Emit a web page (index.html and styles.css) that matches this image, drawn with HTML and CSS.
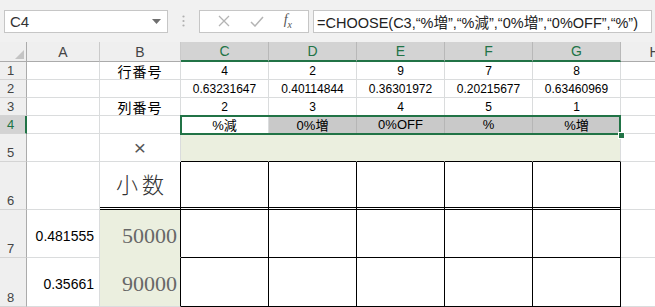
FILE: index.html
```html
<!DOCTYPE html>
<html lang="ja">
<head>
    <meta charset="UTF-8">
    <title>CHOOSE - Sheet1</title>
    <link rel="stylesheet" href="styles.css">
</head>
<body>
    <div class="toolbar">
        <div class="namebox">
            <span>C4</span>
            <svg class="drop" width="9" height="5" viewBox="0 0 9 5"><path d="M0 0h9L4.5 5z" fill="#6f6f6f"/></svg>
        </div>
        <div class="grip">
            <svg width="3" height="12" viewBox="0 0 3 12"><circle cx="1.5" cy="1.5" r="1.1" fill="#b0b0b0"/><circle cx="1.5" cy="6" r="1.1" fill="#b0b0b0"/><circle cx="1.5" cy="10.5" r="1.1" fill="#b0b0b0"/></svg>
        </div>
        <div class="fxbox">
            <svg width="12" height="12" viewBox="0 0 12 12"><path d="M1 1l10 10M11 1L1 11" stroke="#b4b4b4" stroke-width="1.3"/></svg>
            <svg width="14" height="11" viewBox="0 0 14 11"><path d="M1 6l4 4 8-9" stroke="#b4b4b4" stroke-width="1.5" fill="none"/></svg>
            <span class="fx">f<sub>x</sub></span>
        </div>
        <div class="formula">=CHOOSE(C3,“%増”,“%減”,“0%増”,“0%OFF”,“%”)</div>
    </div>

    <div class="sheet">
        <!-- column headers -->
        <div class="corner"><svg width="9" height="9" viewBox="0 0 9 9"><path d="M9 0v9H0z" fill="#c4c4c4"/></svg></div>
        <div class="ch">A</div>
        <div class="ch">B</div>
        <div class="ch sel">C</div>
        <div class="ch sel">D</div>
        <div class="ch sel">E</div>
        <div class="ch sel">F</div>
        <div class="ch sel">G</div>
        <div class="ch">H</div>

        <!-- row 1 -->
        <div class="rh">1</div>
        <div class="c"></div>
        <div class="c jp">行番号</div>
        <div class="c">4</div>
        <div class="c">2</div>
        <div class="c">9</div>
        <div class="c">7</div>
        <div class="c">8</div>
        <div class="c"></div>

        <!-- row 2 -->
        <div class="rh">2</div>
        <div class="c"></div>
        <div class="c"></div>
        <div class="c">0.63231647</div>
        <div class="c">0.40114844</div>
        <div class="c">0.36301972</div>
        <div class="c">0.20215677</div>
        <div class="c">0.63460969</div>
        <div class="c"></div>

        <!-- row 3 -->
        <div class="rh">3</div>
        <div class="c"></div>
        <div class="c jp">列番号</div>
        <div class="c">2</div>
        <div class="c">3</div>
        <div class="c">4</div>
        <div class="c">5</div>
        <div class="c">1</div>
        <div class="c"></div>

        <!-- row 4 -->
        <div class="rh sel">4</div>
        <div class="c"></div>
        <div class="c"></div>
        <div class="range">
            <div class="c lbl">%減</div>
            <div class="c lbl shade">0%増</div>
            <div class="c lbl shade">0%OFF</div>
            <div class="c lbl shade">%</div>
            <div class="c lbl shade">%増</div>
            <span class="handle"></span>
        </div>
        <div class="c"></div>

        <!-- row 5 -->
        <div class="rh">5</div>
        <div class="c"></div>
        <div class="c times">×</div>
        <div class="c green boxtop"></div>
        <div class="c green boxtop"></div>
        <div class="c green boxtop"></div>
        <div class="c green boxtop"></div>
        <div class="c green boxtop last"></div>
        <div class="c"></div>

        <!-- row 6 -->
        <div class="rh">6</div>
        <div class="c"></div>
        <div class="c big edge dbl">小数</div>
        <div class="c box dbl"></div>
        <div class="c box dbl"></div>
        <div class="c box dbl"></div>
        <div class="c box dbl"></div>
        <div class="c box dbl"></div>
        <div class="c"></div>

        <!-- row 7 -->
        <div class="rh">7</div>
        <div class="c num">0.481555</div>
        <div class="c amount green edge joined">50000</div>
        <div class="c box"></div>
        <div class="c box"></div>
        <div class="c box"></div>
        <div class="c box"></div>
        <div class="c box"></div>
        <div class="c"></div>

        <!-- row 8 -->
        <div class="rh">8</div>
        <div class="c num">0.35661</div>
        <div class="c amount green edge">90000</div>
        <div class="c box"></div>
        <div class="c box"></div>
        <div class="c box"></div>
        <div class="c box"></div>
        <div class="c box"></div>
        <div class="c"></div>
    </div>
</body>
</html>
```

FILE: styles.css
```css
body {
    margin: 0;
    width: 655px;
    height: 307px;
    overflow: hidden;
    background: #ffffff;
    font-family: "Liberation Sans", "Noto Sans CJK JP", sans-serif;
    color: #000;
}

/* Formula bar */
.toolbar {
    height: 42px;
    display: flex;
    align-items: center;
    padding: 0 3px 0 4px;
    background: #f1f1f1;
    box-sizing: border-box;
}

.namebox,
.fxbox,
.formula {
    height: 23px;
    background: #ffffff;
    border: 1px solid #c6c6c6;
    box-sizing: border-box;
    display: flex;
    align-items: center;
}

.namebox {
    width: 164px;
    justify-content: space-between;
    padding: 0 6px 0 5px;
    font-size: 15px;
    color: #333;
}

.grip {
    width: 31px;
    display: flex;
    justify-content: center;
}

.fxbox {
    width: 110px;
    justify-content: space-around;
    padding: 0 6px 0 8px;
    margin-right: 4px;
}

.fx {
    font-family: "Liberation Serif", serif;
    font-style: italic;
    font-size: 14px;
    color: #555;
}

.fx sub {
    font-size: 10px;
}

.formula {
    flex: 1;
    padding-left: 3px;
    font-size: 14.5px;
    color: #222;
    white-space: nowrap;
    overflow: hidden;
}

/* Sheet grid */
.sheet {
    width: 689px;
    display: grid;
    grid-template-columns: 27px 73px 81px 88px 88px 88px 88px 88px 68px;
    grid-template-rows: 20px 18px 18px 18px 18px 28px 48px 48px 49px;
}

.corner,
.ch,
.rh,
.c {
    box-sizing: border-box;
    display: flex;
    align-items: center;
    justify-content: center;
    overflow: hidden;
    white-space: nowrap;
}

.corner {
    background: #efefef;
    border-right: 1px solid #ababab;
    border-bottom: 1px solid #ababab;
    align-items: flex-end;
    justify-content: flex-end;
    padding: 0 2px 2px 0;
}

.ch {
    background: #efefef;
    border-right: 1px solid #cacaca;
    border-bottom: 1px solid #ababab;
    font-size: 14px;
    color: #444;
}

.ch.sel {
    background: #d3d3d3;
    color: #217346;
    border-right-color: #b8b8b8;
    border-bottom: 2px solid #217346;
}

.rh {
    background: #efefef;
    border-right: 1px solid #ababab;
    border-bottom: 1px solid #d4d4d4;
    justify-content: flex-start;
    align-items: flex-end;
    padding: 0 0 0 7px;
    font-size: 13px;
    line-height: 17px;
    color: #444;
}

.rh.sel {
    background: #d3d3d3;
    color: #217346;
    border-right: 2px solid #217346;
}

.c {
    border-right: 1px solid #dadcdd;
    border-bottom: 1px solid #dadcdd;
    font-size: 12px;
}

.jp {
    font-size: 14px;
    letter-spacing: 1px;
}

.lbl {
    font-size: 13px;
}

.shade {
    background: #c9c9c9;
    border-right-color: #b6b6b6;
}

.green {
    background: #ebefdf;
    border-right-color: #ebefdf;
}

.green.last {
    border-right-color: #dadcdd;
}

.times {
    font-size: 21px;
    color: #555;
    padding-top: 1px;
}

.big {
    font-size: 22px;
    font-weight: 300;
    letter-spacing: 4px;
    color: #333;
    padding: 0 0 4px 4px;
}

.num {
    justify-content: flex-end;
    padding: 4px 5px 0 0;
    font-size: 14px;
}

.amount {
    justify-content: flex-end;
    padding: 4px 3px 0 0;
    font-family: "Liberation Serif", serif;
    font-size: 22px;
    color: #676767;
}

.joined {
    border-bottom-color: #ebefdf;
}

/* black ruled block */
.boxtop {
    border-bottom-color: #000;
}

.box {
    border-right-color: #000;
    border-bottom-color: #000;
}

.edge {
    border-right-color: #000;
}

.dbl {
    border-bottom: 3px double #000;
}

/* active range C4:G4 */
.range {
    grid-column: span 5;
    display: grid;
    grid-template-columns: repeat(5, 88px);
    position: relative;
}

.range::after {
    content: "";
    position: absolute;
    top: -1px;
    left: -1px;
    right: 0;
    bottom: -1px;
    border: 2px solid #217346;
    pointer-events: none;
}

.handle {
    position: absolute;
    right: -4px;
    bottom: -5px;
    width: 5px;
    height: 5px;
    background: #217346;
    border: 1px solid #ffffff;
    z-index: 1;
}
```
